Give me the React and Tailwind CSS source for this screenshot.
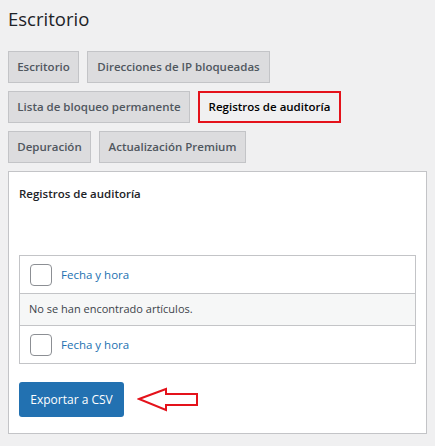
import React from "react";

const tabs = [
  [
    { label: "Escritorio", w: "w-[71px]" },
    { label: "Direcciones de IP bloqueadas", w: "w-[183px]" },
  ],
  [
    { label: "Lista de bloqueo permanente", w: "w-[182px]" },
    { label: "Registros de auditoría", w: "w-[143px]", active: true },
  ],
  [
    { label: "Depuración", w: "w-[83px]" },
    { label: "Actualización Premium", w: "w-[147px]" },
  ],
];

function Checkbox() {
  return <span className="block h-[22px] w-[22px] shrink-0 rounded-[4px] border border-[#8c8f94] bg-white" />;
}

function DateRow() {
  return (
    <div className="flex h-[37px] items-center gap-[9px] px-[10px] bg-white">
      <Checkbox />
      <span className="text-[11.5px] text-[#2271b1]">Fecha y hora</span>
    </div>
  );
}

export default function App() {
  return (
    <div
      className="h-[446px] w-[435px] overflow-hidden bg-[#f0f0f1] px-[8px] text-[#3c434a]"
      style={{ fontFamily: '"Open Sans", "Noto Sans", sans-serif' }}
    >
      <h1 className="pt-[6px] text-[18.5px] leading-[26px] text-[#1d2327]">Escritorio</h1>

      <div className="mt-[19px] flex flex-col gap-[8px]">
        {tabs.map((row, i) => (
          <div key={i} className="flex gap-[8px]">
            {row.map((t) =>
              t.active ? (
                <div
                  key={t.label}
                  className={`${t.w} flex h-[32px] items-center justify-center border-2 border-[#e4121b] bg-[#f0f0f1] text-[11.5px] font-semibold text-black`}
                >
                  {t.label}
                </div>
              ) : (
                <div
                  key={t.label}
                  className={`${t.w} flex h-[32px] items-center justify-center border border-[#c3c4c7] bg-[#dcdcde] text-[11.5px] font-semibold text-[#50575e]`}
                >
                  {t.label}
                </div>
              )
            )}
          </div>
        ))}
      </div>

      <div className="mt-[8px] h-[263px] border border-[#c3c4c7] bg-white px-[10px]">
        <h2 className="pt-[12px] text-[11.5px] font-semibold leading-[20px] text-[#1d2327]">Registros de auditoría</h2>

        <div className="mt-[51px] flex flex-col border border-[#c3c4c7]">
          <DateRow />
          <div className="flex h-[33px] items-center border-y border-[#c3c4c7] bg-[#f6f7f7] px-[9px] text-[11px]">
            No se han encontrado artículos.
          </div>
          <DateRow />
        </div>

        <div className="mt-[18px] flex items-center gap-[13px]">
          <button className="h-[35px] w-[105px] rounded-[3px] bg-[#2271b1] text-[12px] text-white">
            Exportar a CSV
          </button>
          <svg width="62" height="26" viewBox="0 0 62 26" className="block">
            <path
              d="M2 12 L29 2 L29 7 L60 7 L60 18 L29 18 L29 23 Z"
              fill="none"
              stroke="#e4121b"
              strokeWidth="2"
              strokeLinejoin="miter"
            />
          </svg>
        </div>
      </div>
    </div>
  );
}
